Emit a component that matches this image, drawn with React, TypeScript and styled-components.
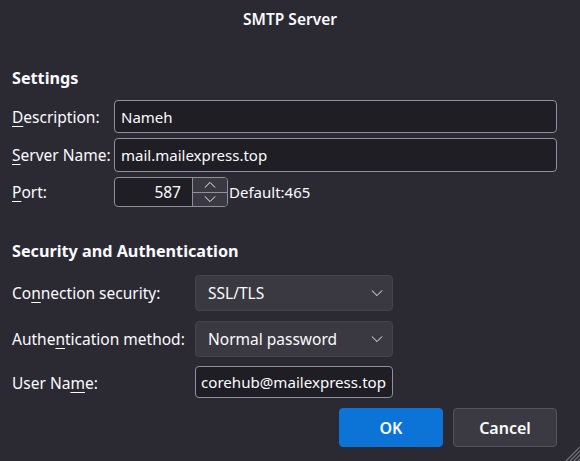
import React from "react";
import styled, {createGlobalStyle} from "styled-components";

const GlobalStyle = createGlobalStyle`
  html, body {
    margin: 0;
    padding: 0;
    background: #2b2a33;
  }
  body {
    font-family: "Noto Sans", "Open Sans", sans-serif;
    color: #fbfbfe;
  }
`

const ChevronDown = () => (
    <svg width="14" height="8" viewBox="0 0 14 8" fill="none">
        <path d="M1 1l6 6 6-6" stroke="#fbfbfe" strokeWidth="1.1"/>
    </svg>
)

const ChevronUp = () => (
    <svg width="14" height="8" viewBox="0 0 14 8" fill="none">
        <path d="M1 7l6-6 6 6" stroke="#fbfbfe" strokeWidth="1.1"/>
    </svg>
)

const Label: React.FC<{ text: string, mnemonic: number }> = ({text, mnemonic}) => (
    <LabelText>
        {text.slice(0, mnemonic)}
        <U>{text[mnemonic]}</U>
        {text.slice(mnemonic + 1)}
    </LabelText>
)

export default function App() {
    return <>
        <GlobalStyle/>
        <Dialog>
            <TitleBar>SMTP Server</TitleBar>
            <Body>
                <Heading>Settings</Heading>
                <SettingsGrid>
                    <Label text="Description:" mnemonic={0}/>
                    <TextInput value="Nameh" readOnly/>
                    <Label text="Server Name:" mnemonic={0}/>
                    <TextInput value="mail.mailexpress.top" readOnly $tall/>
                    <Label text="Port:" mnemonic={0}/>
                    <PortRow>
                        <PortBox>
                            <PortValue>587</PortValue>
                            <Spinner>
                                <SpinButton><ChevronUp/></SpinButton>
                                <SpinButton><ChevronDown/></SpinButton>
                            </Spinner>
                        </PortBox>
                        <DefaultText>Default:465</DefaultText>
                    </PortRow>
                </SettingsGrid>

                <Heading $second>Security and Authentication</Heading>
                <SecurityGrid>
                    <Label text="Connection security:" mnemonic={2}/>
                    <Select>SSL/TLS<ChevronDown/></Select>
                    <Label text="Authentication method:" mnemonic={5}/>
                    <Select>Normal password<ChevronDown/></Select>
                    <Label text="User Name:" mnemonic={7}/>
                    <UserInput value="corehub@mailexpress.top" readOnly/>
                </SecurityGrid>

                <ButtonRow>
                    <Button $primary>OK</Button>
                    <Button>Cancel</Button>
                </ButtonRow>
            </Body>
            <Grip>
                <svg width="16" height="16" viewBox="0 0 16 16">
                    <path d="M16 2L2 16M16 6L6 16M16 10L10 16M16 14L14 16" stroke="#75747c" strokeWidth="1.2"/>
                </svg>
            </Grip>
        </Dialog>
    </>
}

//styled-components
const Dialog = styled.div`
  position: relative;
  width: 580px;
  height: 461px;
  background: #2b2a33;
  overflow: hidden;
`

const TitleBar = styled.div`
  height: 38px;
  display: flex;
  align-items: center;
  justify-content: center;
  font-size: 15.5px;
  font-weight: 600;
  color: #fbfbfe;
`

const Body = styled.div`
  padding: 0 23px 0 12px;
  display: flex;
  flex-direction: column;
`

const Heading = styled.div<{ $second?: boolean }>`
  margin-top: ${p => p.$second ? '34px' : '30px'};
  height: 20px;
  line-height: 20px;
  font-size: 16.2px;
  font-weight: 700;
  color: #fbfbfe;
`

const SettingsGrid = styled.div`
  margin-top: 12px;
  display: grid;
  grid-template-columns: 102px 1fr;
  grid-template-rows: 33px 34px 30px;
  row-gap: 5px;
  align-items: center;
`

const SecurityGrid = styled.div`
  margin-top: 14px;
  display: grid;
  grid-template-columns: 183px 198px;
  grid-template-rows: 36px 36px 32px;
  row-gap: 10px;
  align-items: center;

  & > :nth-child(6) {
    margin-top: -2px;
  }
`

const LabelText = styled.span`
  font-size: 15.5px;
  color: #fbfbfe;
  white-space: nowrap;
`

const U = styled.span`
  text-decoration: underline;
  text-underline-offset: 3px;
`

const TextInput = styled.input<{ $tall?: boolean }>`
  box-sizing: border-box;
  height: ${p => p.$tall ? '34px' : '33px'};
  width: 100%;
  padding: 0 6px;
  background: #1f1e25;
  border: 1px solid #8f8f9d;
  border-radius: 4px;
  color: #fbfbfe;
  font-family: "Noto Sans", sans-serif;
  font-size: 15px;
  outline: none;
`

const UserInput = styled(TextInput)`
  height: 32px;
  padding: 0 3px 0 5px;
  font-size: 15.1px;
`

const PortRow = styled.div`
  display: flex;
  align-items: center;
  height: 30px;
`

const PortBox = styled.div`
  box-sizing: border-box;
  width: 114px;
  height: 30px;
  display: flex;
  background: #1f1e25;
  border: 1px solid #8f8f9d;
  border-radius: 4px;
  overflow: hidden;
`

const PortValue = styled.div`
  flex: 1;
  display: flex;
  align-items: center;
  justify-content: flex-end;
  padding-right: 11px;
  font-size: 15.5px;
`

const Spinner = styled.div`
  width: 34px;
  display: flex;
  flex-direction: column;
  border-left: 1px solid #8f8f9d;
`

const SpinButton = styled.div`
  flex: 1;
  display: flex;
  align-items: center;
  justify-content: center;
  background: #3a3942;

  & + & {
    border-top: 1px solid #8f8f9d;
  }

  svg {
    width: 12px;
  }
`

const DefaultText = styled.span`
  margin-left: 1px;
  font-size: 15px;
`

const Select = styled.div`
  box-sizing: border-box;
  height: 36px;
  display: flex;
  align-items: center;
  justify-content: space-between;
  padding: 0 9px 0 12px;
  background: #3a3942;
  border: 1px solid #45444c;
  border-radius: 4px;
  font-size: 15.5px;
  color: #fbfbfe;

  svg {
    width: 12px;
  }
`

const ButtonRow = styled.div`
  margin-top: 9px;
  display: flex;
  justify-content: flex-end;
  gap: 10px;
`

const Button = styled.div<{ $primary?: boolean }>`
  box-sizing: border-box;
  width: 104px;
  height: 39px;
  display: flex;
  align-items: center;
  justify-content: center;
  border-radius: 4px;
  font-size: 16px;
  font-weight: 600;
  background: ${p => p.$primary ? '#0b74d6' : '#3b3a42'};
  border: 1px solid ${p => p.$primary ? '#0b74d6' : '#55545b'};
  color: #fbfbfe;
`

const Grip = styled.div`
  position: absolute;
  right: 0;
  bottom: 0;
  width: 16px;
  height: 16px;
  display: flex;
`
